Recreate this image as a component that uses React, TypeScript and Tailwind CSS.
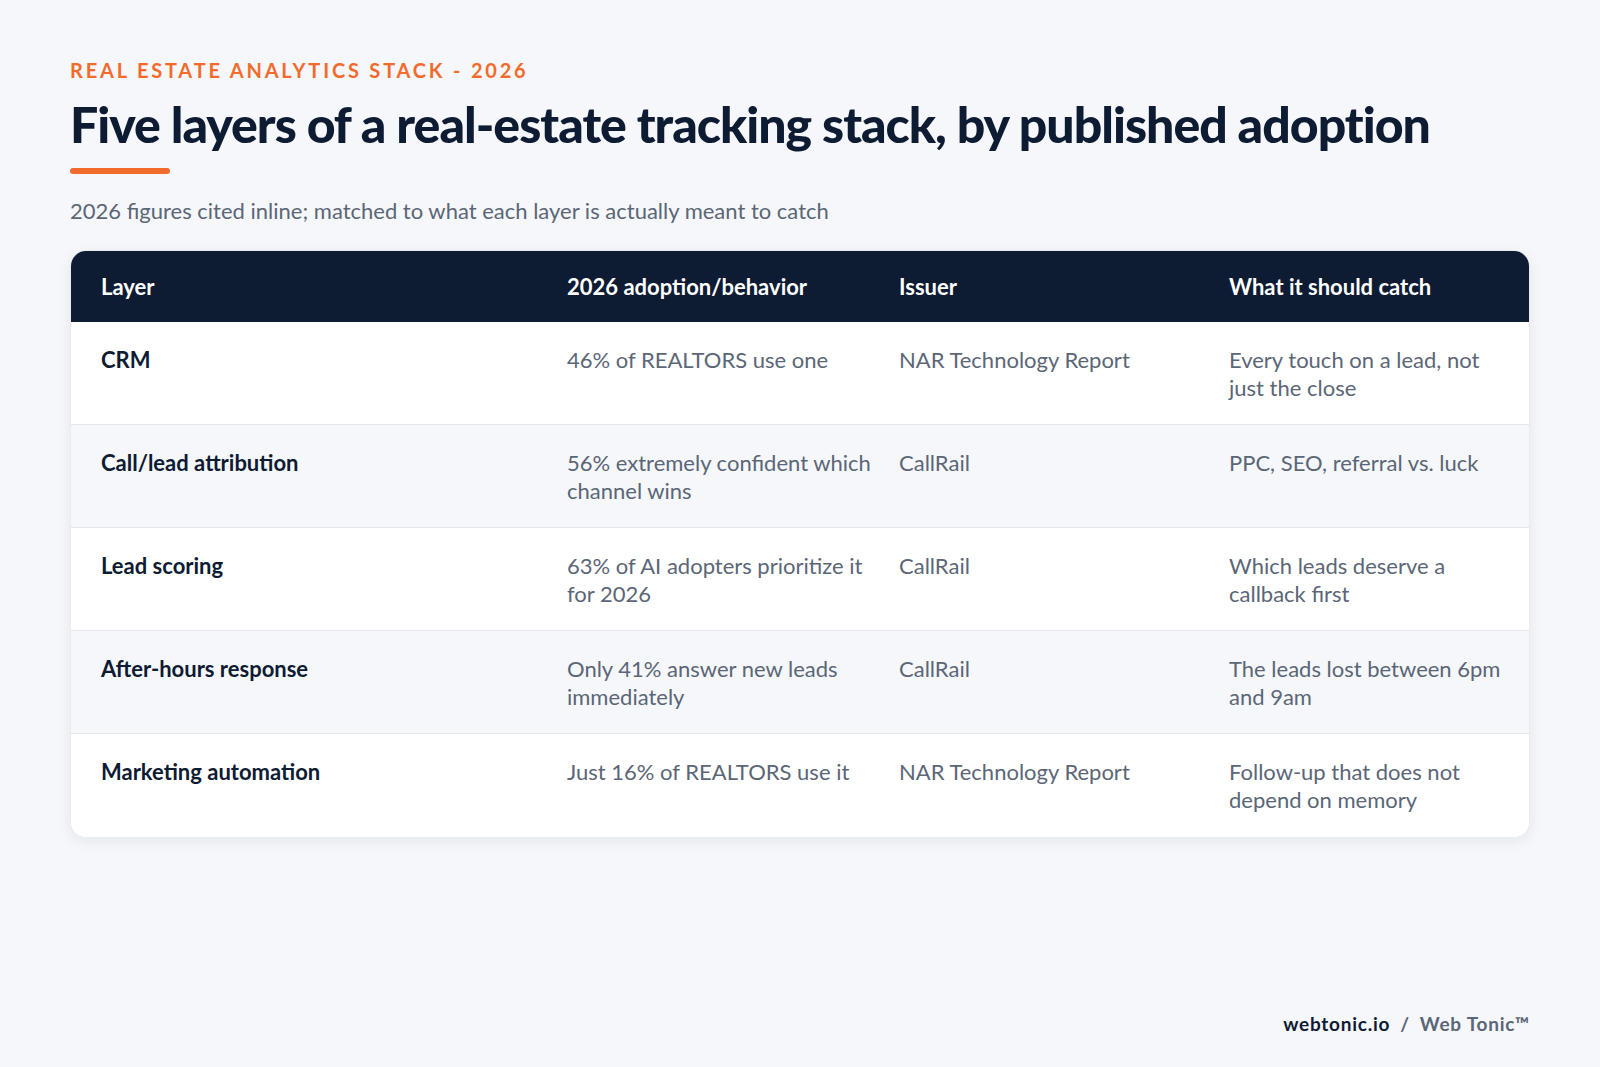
export default function App() {
  const rows = [
    ["CRM", "46% of REALTORS use one", "NAR Technology Report", "Every touch on a lead, not just the close"],
    ["Call/lead attribution", "56% extremely confident which channel wins", "CallRail", "PPC, SEO, referral vs. luck"],
    ["Lead scoring", "63% of AI adopters prioritize it for 2026", "CallRail", "Which leads deserve a callback first"],
    ["After-hours response", "Only 41% answer new leads immediately", "CallRail", "The leads lost between 6pm and 9am"],
    ["Marketing automation", "Just 16% of REALTORS use it", "NAR Technology Report", "Follow-up that does not depend on memory"],
  ];
  const cols = "grid grid-cols-[496px_332px_330px_302px]";
  return (
    <div className="w-[1600px] h-[1067px] bg-[#f5f7fa] px-[70px] pt-[56px] relative" style={{ fontFamily: "Lato, 'Noto Sans', sans-serif" }}>
      <div className="text-[20px] font-bold tracking-[0.14em] text-[#f26b2d] leading-[28px]">REAL ESTATE ANALYTICS STACK - 2026</div>
      <h1 className="mt-[10px] text-[50px] font-extrabold text-[#0d1b33] leading-[60px] tracking-[-0.02em]" style={{ fontWeight: 900 }}>Five layers of a real-estate tracking stack, by published adoption</h1>
      <div className="mt-[14px] w-[100px] h-[6px] rounded-full bg-[#f26b2d]" />
      <p className="mt-[22px] text-[22px] text-[#5b6677] leading-[30px]">2026 figures cited inline; matched to what each layer is actually meant to catch</p>
      <div className="mt-[24px] w-[1460px] rounded-[16px] bg-white overflow-hidden shadow-[0_4px_14px_rgba(15,27,51,0.07)] border border-[#e8ecf1]">
        <div className={`${cols} bg-[#0d1b33] h-[71px] items-center text-white text-[22px] font-bold`}>
          <div className="pl-[30px]">Layer</div>
          <div>2026 adoption/behavior</div>
          <div>Issuer</div>
          <div>What it should catch</div>
        </div>
        {rows.map((r, i) => (
          <div key={i} className={`${cols} h-[103px] pt-[24px] text-[22px] leading-[28px] ${i % 2 ? "bg-[#f5f7fa]" : "bg-white"} ${i < 4 ? "border-b border-[#e3e7ec]" : ""}`}>
            <div className="pl-[30px] font-bold text-[#0d1b33]">{r[0]}</div>
            <div className="pr-[20px] text-[#5b6677]">{r[1]}</div>
            <div className="pr-[20px] text-[#5b6677]">{r[2]}</div>
            <div className="pr-[24px] text-[#5b6677]">{r[3]}</div>
          </div>
        ))}
      </div>
      <div className="absolute right-[70px] top-[1010px] text-[19px] font-bold tracking-[0.04em]">
        <span className="text-[#0d1b33]">webtonic.io</span>
        <span className="text-[#5b6677] mx-[10px]">/</span>
        <span className="text-[#5b6677]">Web Tonic™</span>
      </div>
    </div>
  );
}
